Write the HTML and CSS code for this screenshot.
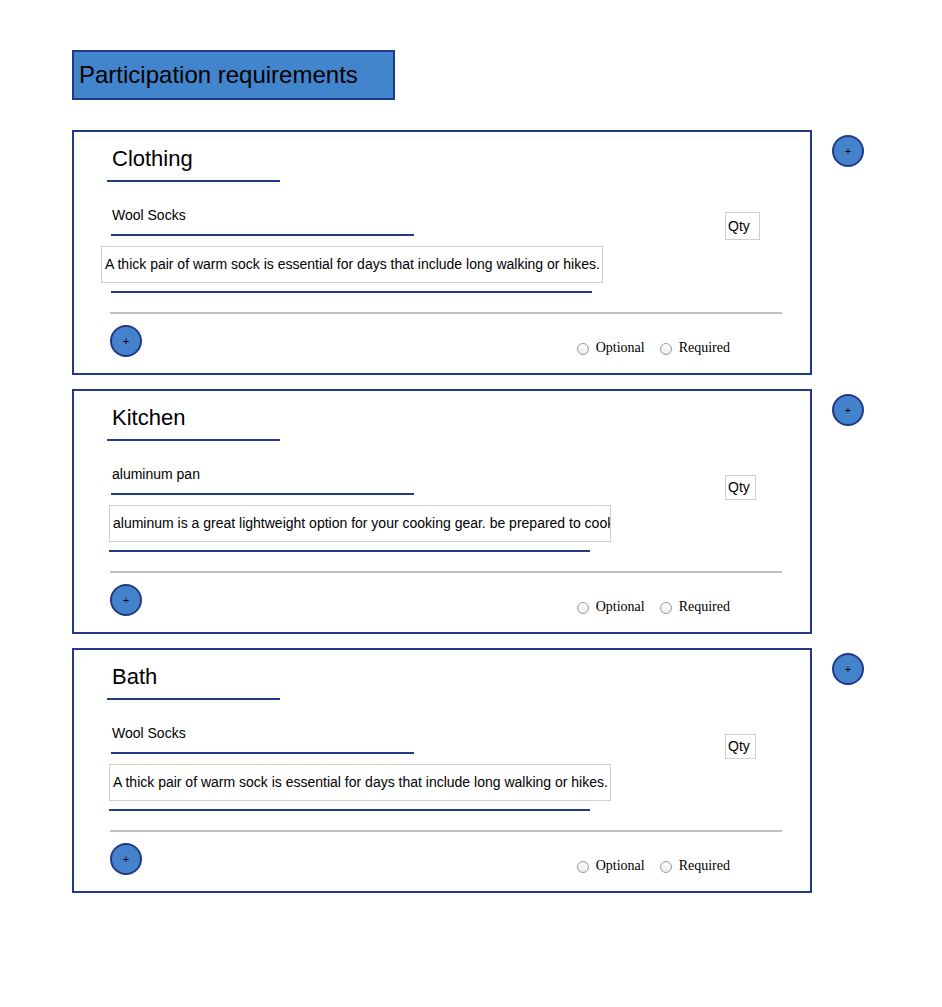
FILE: index.html
```html
<!DOCTYPE html>
<html lang="en">
<head>
<meta charset="utf-8">
<title>Participation requirements</title>
<link rel="stylesheet" href="styles.css">
</head>
<body>
<div class="page">
  <h1 class="page-title">Participation requirements</h1>
  <div class="rows">
    <div class="row">
      <section class="card card--first">
        <h2 class="card-title">Clothing</h2>
        <div class="card-body">
          <div class="fields">
            <div class="item-name">Wool Socks</div>
            <div class="desc">A thick pair of warm sock is essential for days that include long walking or hikes.</div>
            <div class="desc-line"></div>
          </div>
          <div class="qty">Qty</div>
        </div>
        <div class="divider"></div>
        <div class="card-foot">
          <button class="add-btn" type="button">+</button>
          <div class="choices">
            <label class="choice"><span class="radio"></span>Optional</label>
            <label class="choice"><span class="radio"></span>Required</label>
          </div>
        </div>
      </section>
      <button class="add-btn side-add" type="button">+</button>
    </div>

    <div class="row">
      <section class="card">
        <h2 class="card-title">Kitchen</h2>
        <div class="card-body">
          <div class="fields">
            <div class="item-name">aluminum pan</div>
            <div class="desc">aluminum is a great lightweight option for your cooking gear. be prepared to cook over an open fire.</div>
            <div class="desc-line"></div>
          </div>
          <div class="qty">Qty</div>
        </div>
        <div class="divider"></div>
        <div class="card-foot">
          <button class="add-btn" type="button">+</button>
          <div class="choices">
            <label class="choice"><span class="radio"></span>Optional</label>
            <label class="choice"><span class="radio"></span>Required</label>
          </div>
        </div>
      </section>
      <button class="add-btn side-add" type="button">+</button>
    </div>

    <div class="row">
      <section class="card">
        <h2 class="card-title">Bath</h2>
        <div class="card-body">
          <div class="fields">
            <div class="item-name">Wool Socks</div>
            <div class="desc">A thick pair of warm sock is essential for days that include long walking or hikes.</div>
            <div class="desc-line"></div>
          </div>
          <div class="qty">Qty</div>
        </div>
        <div class="divider"></div>
        <div class="card-foot">
          <button class="add-btn" type="button">+</button>
          <div class="choices">
            <label class="choice"><span class="radio"></span>Optional</label>
            <label class="choice"><span class="radio"></span>Required</label>
          </div>
        </div>
      </section>
      <button class="add-btn side-add" type="button">+</button>
    </div>
  </div>
</div>
</body>
</html>
```

FILE: styles.css
```css
* {
  box-sizing: border-box;
}

body {
  margin: 0;
  background: #ffffff;
  color: #000000;
  font-family: "Liberation Sans", Arial, sans-serif;
}

.page {
  padding: 50px 0 40px 72px;
}

.page-title {
  margin: 0;
  width: 323px;
  height: 50px;
  border: 2px solid #1f3a86;
  background: #4285cc;
  padding: 9px 4px 9px 5px;
  font-size: 24px;
  line-height: 28px;
  font-weight: normal;
}

.rows {
  margin-top: 30px;
  display: flex;
  flex-direction: column;
  gap: 14px;
}

.row {
  display: flex;
  align-items: flex-start;
  gap: 20px;
}

.card {
  width: 740px;
  border: 2px solid #22398a;
  padding: 0 28px 16px 36px;
  display: flex;
  flex-direction: column;
}

.card-title {
  margin: 14px 0 0 -3px;
  width: 173px;
  padding: 0 0 8px 5px;
  border-bottom: 2px solid #22398a;
  font-size: 22px;
  line-height: 26px;
  font-weight: normal;
}

.card-body {
  display: flex;
  align-items: flex-start;
}

.fields {
  display: flex;
  flex-direction: column;
}

.item-name {
  margin: 25px 0 0 1px;
  width: 303px;
  padding: 0 0 11px 1px;
  border-bottom: 2px solid #22398a;
  font-size: 14px;
  line-height: 16px;
}

.desc {
  margin: 10px 0 0 -1px;
  width: 502px;
  height: 37px;
  border: 1px solid #cfcfcf;
  padding: 0 3px;
  font-size: 14px;
  line-height: 35px;
  white-space: nowrap;
  overflow: hidden;
}

.desc-line {
  margin: 8px 0 0 -1px;
  width: 481px;
  height: 2px;
  background: #22398a;
}

.card--first .desc {
  margin-left: -9px;
}

.card--first .desc-line {
  margin-left: 1px;
}

.qty {
  margin: 34px 26px 0 auto;
  width: 31px;
  height: 25px;
  border: 1px solid #cfcfcf;
  padding-left: 2px;
  font-size: 14px;
  line-height: 23px;
}

.card--first .qty {
  margin-top: 30px;
  margin-right: 22px;
  width: 35px;
  height: 28px;
  line-height: 26px;
}

.divider {
  margin-top: 19px;
  height: 2px;
  background: #bfbfbf;
}

.card-foot {
  margin-top: 11px;
  display: flex;
  align-items: flex-end;
  justify-content: space-between;
}

.add-btn {
  width: 32px;
  height: 32px;
  padding: 0;
  border-radius: 50%;
  border: 2px solid #22398a;
  background: #4483cc;
  color: #000000;
  font-family: "Liberation Sans", Arial, sans-serif;
  font-size: 11px;
  line-height: 1;
  display: flex;
  align-items: center;
  justify-content: center;
}

.side-add {
  margin-top: 5px;
  flex: none;
}

.choices {
  margin-right: 52px;
  padding-bottom: 1px;
  display: flex;
  align-items: center;
  font-family: "Liberation Serif", "Times New Roman", serif;
  font-size: 14px;
  line-height: 16px;
}

.choice {
  display: flex;
  align-items: center;
  gap: 7px;
}

.choice + .choice {
  margin-left: 15px;
}

.radio {
  width: 12px;
  height: 12px;
  margin-top: 2px;
  border-radius: 50%;
  border: 1px solid #9a9a9a;
  background: linear-gradient(#ffffff, #ececec);
}
```
